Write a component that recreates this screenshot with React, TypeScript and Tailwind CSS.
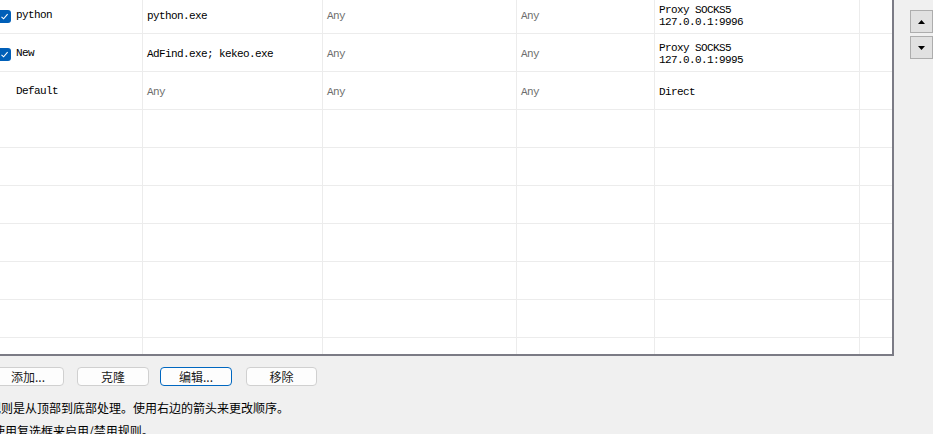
import React from "react";

const mono = { fontFamily: '"Liberation Mono", "Noto Sans CJK SC", monospace' };

type Row = { check?: boolean; name?: string; app?: string; appGray?: boolean; a?: string; b?: string; action?: string[] };

const rows: Row[] = [
  { check: true, name: "python", app: "python.exe", a: "Any", b: "Any", action: ["Proxy SOCKS5", "127.0.0.1:9996"] },
  { check: true, name: "New", app: "AdFind.exe; kekeo.exe", a: "Any", b: "Any", action: ["Proxy SOCKS5", "127.0.0.1:9995"] },
  { check: false, name: "Default", app: "Any", appGray: true, a: "Any", b: "Any", action: ["Direct"] },
  {}, {}, {}, {}, {}, {}, {},
];

function Check() {
  return (
    <div className="w-[13px] h-[13px] ml-[-2px] rounded-[3px] bg-[#005fb8] flex items-center justify-center shrink-0">
      <svg width="9" height="9" viewBox="0 0 9 9">
        <path d="M1.5 4.8 L3.6 6.8 L7.6 2.2" stroke="white" strokeWidth="1.1" fill="none" />
      </svg>
    </div>
  );
}

function Btn({ label, w = "w-[72px]", focus = false, cls = "" }: { label: string; w?: string; focus?: boolean; cls?: string }) {
  return (
    <div
      className={`${w} h-[19px] rounded-[4px] flex items-center justify-center text-[12px] text-[#1a1a1a] bg-[#fdfdfd] ${
        focus ? "border-[1.5px] border-[#0067c0]" : "border border-[#d0d0d0]"
      } ${cls}`}
      style={{ fontFamily: '"Noto Sans CJK SC", sans-serif' }}
    >
      {label}
    </div>
  );
}

export default function App() {
  return (
    <div className="w-[933px] h-[434px] bg-[#f0f0f0] overflow-hidden flex flex-col">
      <div className="flex flex-row">
        <div className="w-[894px] h-[356px] bg-white border-r-2 border-b-2 border-[#7b7b85] overflow-hidden shrink-0">
          <div className="flex flex-col mt-[-4px]">
            {rows.map((r, i) => (
              <div key={i} className="flex flex-row h-[38px] border-b border-[#ececec] shrink-0 text-[11px] tracking-[-0.6px]" style={mono}>
                <div className="w-[143px] border-r border-[#ececec] flex items-center gap-[5px] pt-[3px] text-black">
                  {r.name !== undefined && (r.check ? <Check /> : <div className="w-[13px] h-[13px] ml-[-2px]" />)}
                  {r.name && <span className="pb-[1px]">{r.name}</span>}
                </div>
                <div className={`w-[180px] border-r border-[#ececec] flex items-center pl-[4px] pt-[3px] ${r.appGray ? "text-[#6d6d6d]" : "text-black"}`}>
                  {r.app}
                </div>
                <div className="w-[194px] border-r border-[#ececec] flex items-center pl-[4px] pt-[3px] text-[#6d6d6d]">{r.a}</div>
                <div className="w-[138px] border-r border-[#ececec] flex items-center pl-[4px] pt-[3px] text-[#6d6d6d]">{r.b}</div>
                <div className="w-[205px] border-r border-[#ececec] flex flex-col justify-center pl-[4px] pt-[3px] text-black leading-[12px]">
                  {r.action?.map((l, j) => (
                    <span key={j}>{l}</span>
                  ))}
                </div>
                <div className="flex-1" />
              </div>
            ))}
          </div>
        </div>
        <div className="ml-[16px] mt-[10px] flex flex-col gap-[3px]">
          <div className="w-[23px] h-[23px] border border-[#adadad] bg-[#e1e1e1] flex items-center justify-center">
            <svg width="7" height="4" viewBox="0 0 7 4"><path d="M0 4 L3.5 0 L7 4 Z" fill="#000" /></svg>
          </div>
          <div className="w-[23px] h-[23px] border border-[#adadad] bg-[#e1e1e1] flex items-center justify-center">
            <svg width="7" height="4" viewBox="0 0 7 4"><path d="M0 0 L3.5 4 L7 0 Z" fill="#000" /></svg>
          </div>
        </div>
      </div>
      <div className="flex flex-row mt-[11px] ml-[-8px]">
        <Btn label="添加..." />
        <Btn label="克隆" cls="ml-[13px]" />
        <Btn label="编辑..." focus cls="ml-[11px]" />
        <Btn label="移除" w="w-[71px]" cls="ml-[14px]" />
      </div>
      <div className="mt-[12px] flex flex-col text-[12px] text-black leading-[20px]" style={{ fontFamily: '"Noto Sans CJK SC", sans-serif' }}>
        <div className="ml-[-11px] whitespace-nowrap">规则是从顶部到底部处理。使用右边的箭头来更改顺序。</div>
        <div className="ml-[-7px] mt-[3px] whitespace-nowrap">使用复选框来启用/禁用规则。</div>
      </div>
    </div>
  );
}
